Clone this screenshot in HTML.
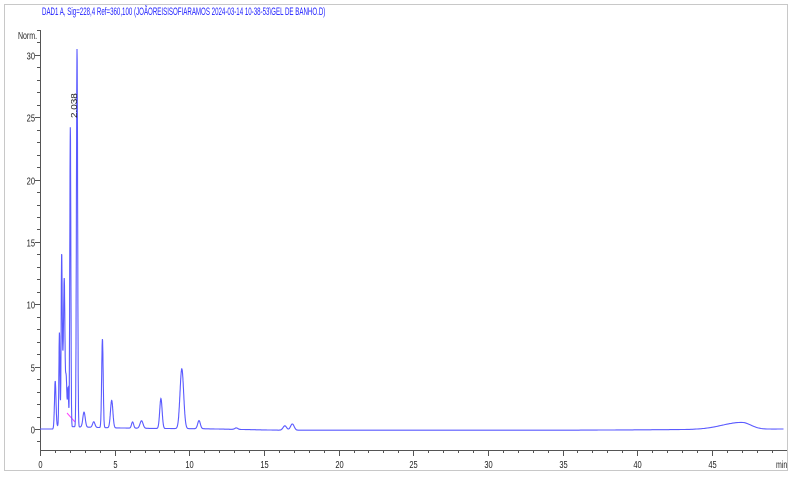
<!DOCTYPE html>
<html><head><meta charset="utf-8"><style>
html,body{margin:0;padding:0;background:#fff;width:793px;height:479px;overflow:hidden}
svg{display:block}
text{font-family:"Liberation Sans",sans-serif}
</style></head><body>
<svg width="793" height="479" viewBox="0 0 793 479">
<rect x="4.5" y="4.5" width="783" height="466" fill="#fff" stroke="#c8c8c8"/>
<text x="42" y="15" font-size="11" fill="#2020ff" transform="translate(42 0) scale(0.56 1) translate(-42 0)">DAD1 A, Sig=228,4 Ref=360,100 (JOÃOREISISOFIARAMOS 2024-03-14 10-38-53\GEL DE BANHO.D)</text>
<text x="18" y="39" font-size="10" fill="#222" transform="translate(18 0) scale(0.7 1) translate(-18 0)">Norm.</text>
<g stroke="#555" stroke-width="1" fill="none">
<line x1="40.5" y1="30" x2="40.5" y2="450"/>
<line x1="40" y1="450.5" x2="787" y2="450.5"/>
</g>
<g id="yt" stroke="#555" stroke-width="1"></g>
<g id="xt" stroke="#555" stroke-width="1"></g>
<g id="yl" font-size="10" fill="#222" text-anchor="end"></g>
<g id="xl" font-size="10" fill="#222" text-anchor="middle"></g>
<text x="776" y="468" font-size="10" fill="#222" transform="translate(776 0) scale(0.7 1) translate(-776 0)">min</text>
<line x1="67" y1="413" x2="75" y2="422" stroke="#ff40ff" stroke-width="1"/>
<polyline id="tr" fill="none" stroke="#5a5aff" stroke-width="1.1"/>
<text x="0" y="0" font-size="9" fill="#222" transform="translate(77 118) rotate(-90) scale(1.1 0.9)">2.038</text>
</svg>
<script>
var X=function(m){return 40+m*14.93},Y=function(v){return 429-v*12.47};
var ns="http://www.w3.org/2000/svg";
function el(p,t,a,txt){var e=document.createElementNS(ns,t);for(var k in a)e.setAttribute(k,a[k]);if(txt!==undefined)e.textContent=txt;document.getElementById(p).appendChild(e);}
for(var v=-2;v<=32;v++){var y=Math.round(Y(v))+.5;if(y<30||y>450)continue;var L=v%5==0?5:3;el('yt','line',{x1:40-L,y1:y,x2:40,y2:y});if(v%5==0&&v>=0)el('yl','text',{x:35,y:y+4,transform:'translate(35 0) scale(0.75 1) translate(-35 0)'},String(v));}
for(var m=0;m<=49;m++){var x=Math.round(X(m))+.5;var L=m%5==0?6:3;el('xt','line',{x1:x,y1:450,x2:x,y2:450+L});if(m%5==0)el('xl','text',{x:x,y:468,transform:'translate('+x+' 0) scale(0.75 1) translate('+(-x)+' 0)'},String(m));}
var G=[[1.02,3.6,0.05],[1.3,7.5,0.035],[1.45,12,0.035],[1.55,5,0.07],[1.63,9,0.04],[1.75,4,0.05],[1.88,3,0.035],[2.03,24,0.035],[2.48,30.3,0.04],[2.95,1.2,0.08],[3.6,0.45,0.08],[4.18,7.1,0.05],[4.8,2.2,0.08],[6.2,0.5,0.07],[6.8,0.6,0.1],[8.1,2.4,0.08],[9.5,4.8,0.12],[10.65,0.65,0.09],[13.15,0.12,0.1],[16.4,0.35,0.12],[16.9,0.5,0.12]];
function f(t){var s=0;if(t>0.97)s+=0.25*Math.exp(-(t-1)/4)*Math.min(1,(t-0.97)/0.03);
s+=-0.1*Math.min(1,Math.max(0,(t-11)/5));s+=0.1*Math.max(0,(t-35)/15);
for(var i=0;i<G.length;i++){var g=G[i];s+=g[1]*Math.exp(-Math.pow(t-g[0],2)/(2*g[2]*g[2]));}
var sg=t<47?1.3:0.6;s+=0.55*Math.exp(-Math.pow(t-47,2)/(2*sg*sg));return s;}
var pts=[];for(var t=0;t<=49.9;t+=(t<20?0.01:0.1)){pts.push(X(t).toFixed(1)+','+Y(f(t)).toFixed(1));}
document.getElementById('tr').setAttribute('points',pts.join(' '));
</script>
</body></html>
